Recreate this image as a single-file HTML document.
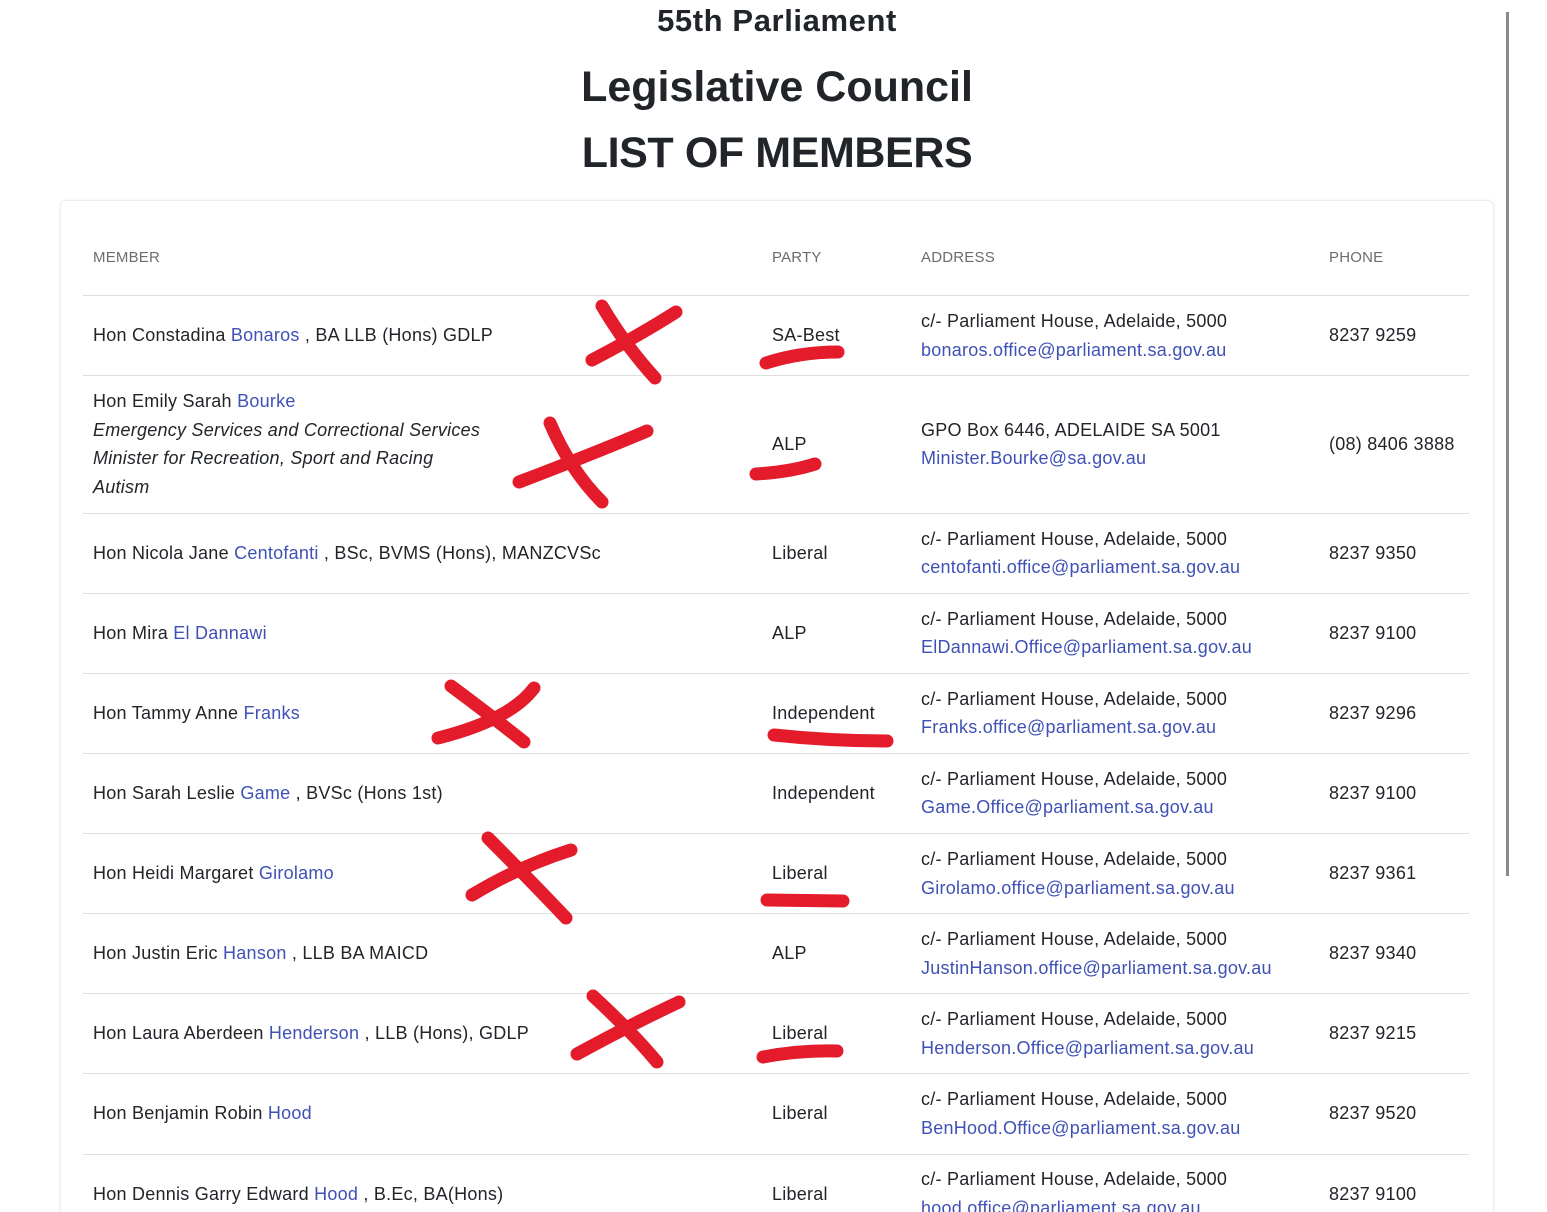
<!DOCTYPE html>
<html><head><meta charset="utf-8"><style>
html,body{margin:0;padding:0;background:#fff;width:1547px;height:1212px;overflow:hidden;position:relative;font-family:"Liberation Sans",Arial,sans-serif;color:#212529}
.t{position:absolute;left:0;width:1554px;text-align:center;font-weight:bold;color:#212529;white-space:nowrap}
.card{position:absolute;left:60px;top:200px;width:1432px;height:1011px;border:1px solid #ececec;border-bottom:none;border-radius:6px 6px 0 0;box-shadow:0 0 4px rgba(0,0,0,0.05)}
.hl{position:absolute;left:83px;width:1386px;height:1px;background:#dedede}
.x{position:absolute;white-space:nowrap;font-size:18px;line-height:20px;letter-spacing:0.25px;transform:translateY(-10px)}
.h{position:absolute;font-size:15px;color:#6c6c6c;top:249px;letter-spacing:0.2px}
a{color:#3f51b5;text-decoration:none}
i{font-style:italic}
.sb{position:absolute;left:1506px;top:12px;width:3px;height:864px;background:#8a8a8a}
</style></head><body>
<div class="t" style="top:3px;font-size:31px;letter-spacing:0.6px">55th Parliament</div>
<div class="t" style="top:63px;font-size:43px">Legislative Council</div>
<div class="t" style="top:129px;font-size:43px;letter-spacing:-0.4px">LIST OF MEMBERS</div>
<div class="sb"></div>
<div class="card"></div>
<div class="h" style="left:93px">MEMBER</div>
<div class="h" style="left:772px">PARTY</div>
<div class="h" style="left:921px">ADDRESS</div>
<div class="h" style="left:1329px">PHONE</div>
<div class="hl" style="top:295px"></div>
<div class="hl" style="top:375px"></div>
<div class="hl" style="top:513px"></div>
<div class="hl" style="top:593px"></div>
<div class="hl" style="top:673px"></div>
<div class="hl" style="top:753px"></div>
<div class="hl" style="top:833px"></div>
<div class="hl" style="top:913px"></div>
<div class="hl" style="top:993px"></div>
<div class="hl" style="top:1073px"></div>
<div class="hl" style="top:1154px"></div>

<div class="x" style="left:93px;top:335px">Hon Constadina <a>Bonaros</a> , BA LLB (Hons) GDLP</div>
<div class="x" style="left:772px;top:335px">SA-Best</div>
<div class="x" style="left:921px;top:321px">c/- Parliament House, Adelaide, 5000</div>
<div class="x" style="left:921px;top:350px"><a>bonaros.office@parliament.sa.gov.au</a></div>
<div class="x" style="left:1329px;top:335px">8237 9259</div>

<div class="x" style="left:93px;top:401px">Hon Emily Sarah <a>Bourke</a></div>
<div class="x" style="left:93px;top:430px"><i>Emergency Services and Correctional Services</i></div>
<div class="x" style="left:93px;top:458px"><i>Minister for Recreation, Sport and Racing</i></div>
<div class="x" style="left:93px;top:487px"><i>Autism</i></div>
<div class="x" style="left:772px;top:444px">ALP</div>
<div class="x" style="left:921px;top:430px">GPO Box 6446, ADELAIDE SA 5001</div>
<div class="x" style="left:921px;top:458px"><a>Minister.Bourke@sa.gov.au</a></div>
<div class="x" style="left:1329px;top:444px">(08) 8406 3888</div>

<div class="x" style="left:93px;top:553px">Hon Nicola Jane <a>Centofanti</a> , BSc, BVMS (Hons), MANZCVSc</div>
<div class="x" style="left:772px;top:553px">Liberal</div>
<div class="x" style="left:921px;top:539px">c/- Parliament House, Adelaide, 5000</div>
<div class="x" style="left:921px;top:567px"><a>centofanti.office@parliament.sa.gov.au</a></div>
<div class="x" style="left:1329px;top:553px">8237 9350</div>

<div class="x" style="left:93px;top:633px">Hon Mira <a>El Dannawi</a></div>
<div class="x" style="left:772px;top:633px">ALP</div>
<div class="x" style="left:921px;top:619px">c/- Parliament House, Adelaide, 5000</div>
<div class="x" style="left:921px;top:647px"><a>ElDannawi.Office@parliament.sa.gov.au</a></div>
<div class="x" style="left:1329px;top:633px">8237 9100</div>

<div class="x" style="left:93px;top:713px">Hon Tammy Anne <a>Franks</a></div>
<div class="x" style="left:772px;top:713px">Independent</div>
<div class="x" style="left:921px;top:699px">c/- Parliament House, Adelaide, 5000</div>
<div class="x" style="left:921px;top:727px"><a>Franks.office@parliament.sa.gov.au</a></div>
<div class="x" style="left:1329px;top:713px">8237 9296</div>

<div class="x" style="left:93px;top:793px">Hon Sarah Leslie <a>Game</a> , BVSc (Hons 1st)</div>
<div class="x" style="left:772px;top:793px">Independent</div>
<div class="x" style="left:921px;top:779px">c/- Parliament House, Adelaide, 5000</div>
<div class="x" style="left:921px;top:807px"><a>Game.Office@parliament.sa.gov.au</a></div>
<div class="x" style="left:1329px;top:793px">8237 9100</div>

<div class="x" style="left:93px;top:873px">Hon Heidi Margaret <a>Girolamo</a></div>
<div class="x" style="left:772px;top:873px">Liberal</div>
<div class="x" style="left:921px;top:859px">c/- Parliament House, Adelaide, 5000</div>
<div class="x" style="left:921px;top:888px"><a>Girolamo.office@parliament.sa.gov.au</a></div>
<div class="x" style="left:1329px;top:873px">8237 9361</div>

<div class="x" style="left:93px;top:953px">Hon Justin Eric <a>Hanson</a> , LLB BA MAICD</div>
<div class="x" style="left:772px;top:953px">ALP</div>
<div class="x" style="left:921px;top:939px">c/- Parliament House, Adelaide, 5000</div>
<div class="x" style="left:921px;top:968px"><a>JustinHanson.office@parliament.sa.gov.au</a></div>
<div class="x" style="left:1329px;top:953px">8237 9340</div>

<div class="x" style="left:93px;top:1033px">Hon Laura Aberdeen <a>Henderson</a> , LLB (Hons), GDLP</div>
<div class="x" style="left:772px;top:1033px">Liberal</div>
<div class="x" style="left:921px;top:1019px">c/- Parliament House, Adelaide, 5000</div>
<div class="x" style="left:921px;top:1048px"><a>Henderson.Office@parliament.sa.gov.au</a></div>
<div class="x" style="left:1329px;top:1033px">8237 9215</div>

<div class="x" style="left:93px;top:1113px">Hon Benjamin Robin <a>Hood</a></div>
<div class="x" style="left:772px;top:1113px">Liberal</div>
<div class="x" style="left:921px;top:1099px">c/- Parliament House, Adelaide, 5000</div>
<div class="x" style="left:921px;top:1128px"><a>BenHood.Office@parliament.sa.gov.au</a></div>
<div class="x" style="left:1329px;top:1113px">8237 9520</div>

<div class="x" style="left:93px;top:1194px">Hon Dennis Garry Edward <a>Hood</a> , B.Ec, BA(Hons)</div>
<div class="x" style="left:772px;top:1194px">Liberal</div>
<div class="x" style="left:921px;top:1179px">c/- Parliament House, Adelaide, 5000</div>
<div class="x" style="left:921px;top:1208px"><a>hood.office@parliament.sa.gov.au</a></div>
<div class="x" style="left:1329px;top:1194px">8237 9100</div>

<svg width="1547" height="1212" style="position:absolute;left:0;top:0" fill="none" stroke="#e31b2a" stroke-width="13" stroke-linecap="round">
<path d="M602 306 Q625 345 655 378"/><path d="M592 360 Q640 335 676 312"/>
<path d="M766 363 Q800 352 838 352"/>
<path d="M550 423 Q570 470 602 502"/><path d="M519 482 Q590 455 647 431"/>
<path d="M756 474 Q790 472 815 464"/>
<path d="M451 686 Q490 715 524 742"/><path d="M438 738 Q510 720 534 688"/>
<path d="M774 735 Q830 741 887 741"/>
<path d="M488 838 Q530 880 566 918"/><path d="M472 895 Q520 866 571 850"/>
<path d="M767 900 L843 901"/>
<path d="M593 996 Q630 1030 657 1062"/><path d="M577 1054 Q630 1025 679 1002"/>
<path d="M763 1057 Q800 1050 837 1051"/>
</svg>
</body></html>
